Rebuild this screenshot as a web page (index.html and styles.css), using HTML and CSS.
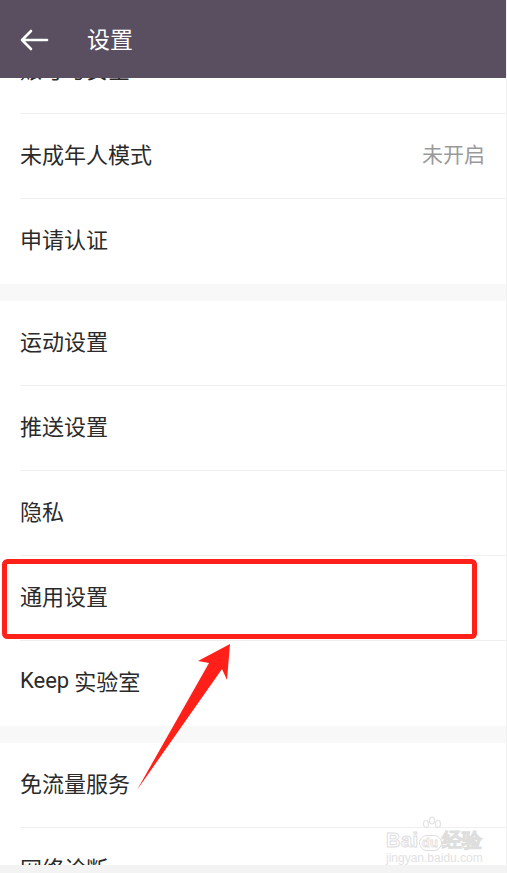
FILE: index.html
```html
<!DOCTYPE html>
<html>

<head>
    <title>设置</title>
    <link rel="stylesheet" href="styles.css">
</head>

<body>
    <div class="page">
        <div class="header">
            <svg class="back" width="30" height="22" viewBox="0 0 30 22">
                <path d="M28 11 H3 M12 2 L3 11 L12 20" fill="none" stroke="#fff" stroke-width="2.6" stroke-linecap="round" stroke-linejoin="round" />
            </svg>
            <div class="title">设置</div>
        </div>

        <div class="list">
            <div class="group first">
                <div class="row">账号与安全</div>
                <div class="row">未成年人模式<span class="value">未开启</span></div>
                <div class="row">申请认证</div>
            </div>
            <div class="group">
                <div class="row">运动设置</div>
                <div class="row">推送设置</div>
                <div class="row">隐私</div>
                <div class="row">通用设置</div>
                <div class="row"><span class="latin">Keep</span>&nbsp;实验室</div>
            </div>
            <div class="group">
                <div class="row">免流量服务</div>
                <div class="row">网络诊断</div>
            </div>
        </div>
        <div class="footer"></div>

        <!-- annotation drawn over the screen -->
        <svg class="marks" width="507" height="873" viewBox="0 0 507 873">
            <rect x="4.5" y="561.5" width="470" height="75" rx="3" fill="none" stroke="#ff2119" stroke-width="5" />
            <polygon points="137,790 209,663 198,661 230,644 227,680 222,669" fill="#ff2119" />
        </svg>

        <div class="watermark">
            <svg class="paw" width="24" height="20" viewBox="0 0 24 20">
                <g fill="none" stroke="#e0e0e0" stroke-width="1.2">
                    <ellipse cx="6" cy="8" rx="2.5" ry="3.5" />
                    <ellipse cx="12" cy="4.5" rx="2.5" ry="3.5" />
                    <ellipse cx="18" cy="8" rx="2.5" ry="3.5" />
                </g>
            </svg>
            <div class="wm-main">Bai<span class="du">du</span>经验</div>
            <div class="wm-url">jingyan.baidu.com</div>
        </div>
    </div>
</body>

</html>
```

FILE: styles.css
```css
body {
    margin: 0;
    background-color: #ffffff;
    font-family: "Noto Sans CJK SC", Roboto, sans-serif;
}

.page {
    position: relative;
    width: 506px;
    height: 873px;
    border-right: 1px solid #f1f1f1;
    overflow: hidden;
    display: flex;
    flex-direction: column;
}

.header {
    height: 78px;
    flex-shrink: 0;
    background-color: #5a4f60;
    display: flex;
    align-items: center;
    padding-left: 19px;
    position: relative;
    z-index: 1;
}

.back {
    display: block;
    margin-top: 1px;
}

.title {
    color: #ffffff;
    font-size: 23px;
    margin-left: 38px;
    margin-bottom: 3px;
}

.list {
    flex: 1;
    overflow: hidden;
    background-color: #f8f8f8;
}

.group {
    background-color: #ffffff;
    margin-bottom: 17px;
}

.group.first {
    margin-top: -49px;
}

.row {
    box-sizing: border-box;
    height: 85px;
    margin-left: 20px;
    padding-right: 21px;
    padding-bottom: 6px;
    border-bottom: 1px solid #efefef;
    display: flex;
    align-items: center;
    font-size: 22px;
    color: #2a2a2a;
}

.group .row:last-child {
    border-bottom-color: transparent;
}

.latin {
    font-family: Roboto, sans-serif;
    font-size: 22px;
}

.value {
    margin-left: auto;
    color: #9a9a9a;
    font-size: 21px;
}

.footer {
    height: 8px;
    flex-shrink: 0;
    background-color: #f3f3f3;
}

.marks {
    position: absolute;
    left: 0;
    top: 0;
    pointer-events: none;
}

.watermark {
    position: absolute;
    left: 386px;
    top: 816px;
    width: 96px;
    text-align: center;
    color: #ffffff;
}

.paw {
    position: absolute;
    left: 34px;
    top: 0;
}

.wm-main {
    margin-top: 13px;
    font-family: "Liberation Sans", sans-serif;
    font-size: 20px;
    font-weight: bold;
    -webkit-text-stroke: 1px #dedede;
    letter-spacing: 0.5px;
    line-height: 22px;
    white-space: nowrap;
}

.du {
    font-size: 13px;
    display: inline-block;
    border: 1px solid #dedede;
    border-radius: 8px;
    padding: 0 2px;
    line-height: 14px;
    -webkit-text-stroke: 0.8px #dedede;
}

.wm-url {
    font-family: "Liberation Sans", sans-serif;
    font-size: 12px;
    color: #e2e2e2;
    line-height: 14px;
    white-space: nowrap;
}
```
